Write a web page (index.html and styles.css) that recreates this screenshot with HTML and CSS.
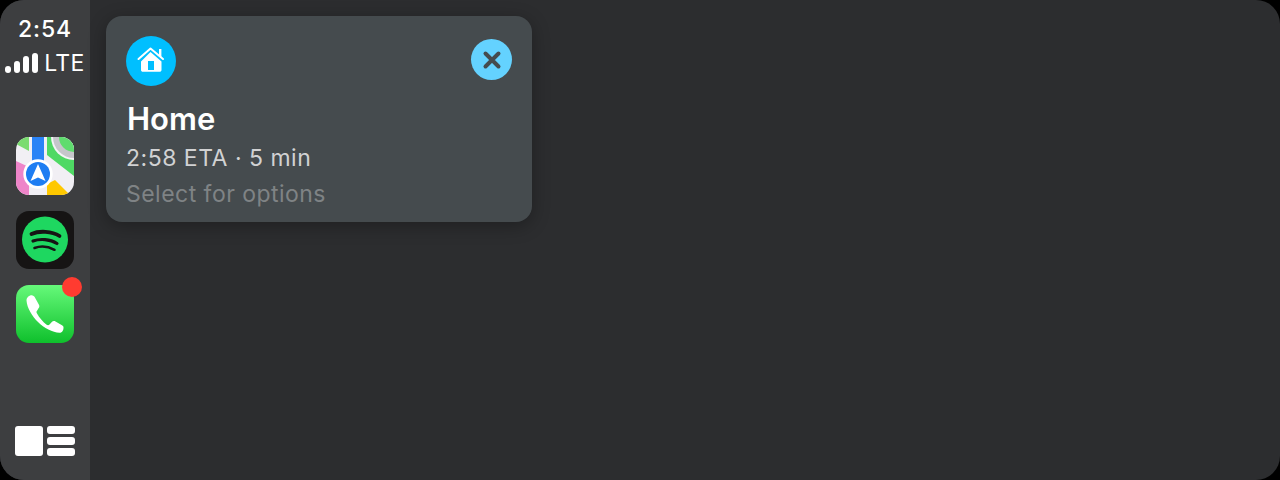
FILE: index.html
```html
<!DOCTYPE html>
<html lang="en">
<head>
<meta charset="utf-8">
<title>CarPlay</title>
<link rel="stylesheet" href="styles.css">
</head>
<body>
<div class="screen">
  <aside class="sidebar">
    <div class="status">
      <div class="time">2:54</div>
      <div class="signal">
        <span class="bars">
          <span class="bar bar1"></span><span class="bar bar2"></span><span class="bar bar3"></span><span class="bar bar4"></span>
        </span>
        <span class="lte">LTE</span>
      </div>
    </div>
    <nav class="apps">
      <svg class="app" viewBox="0 0 58 58" aria-label="Maps">
        <defs>
          <clipPath id="mapclip"><rect width="58" height="58" rx="13"/></clipPath>
        </defs>
        <g clip-path="url(#mapclip)">
          <rect width="58" height="58" fill="#f1eff4"/>
          <path d="M0 0H13V14L0 7Z" fill="#7bdc70"/>
          <path d="M31 0H58V39L31 18Z" fill="#4fd964"/>
          <path d="M0 24L13 30V58H0Z" fill="#ee85c9"/>
          <path d="M31 58V47L39 43L54 58Z" fill="#ffc800"/>
          <circle cx="58" cy="0" r="23" fill="#f4f3f6"/>
          <circle cx="58" cy="0" r="21" fill="#c6c6cb"/>
          <circle cx="58" cy="0" r="15" fill="#5fdc6e"/>
          <rect x="16" y="0" width="12" height="30" fill="#2a83f6"/>
          <circle cx="22" cy="37" r="14.700" fill="#fff"/>
          <circle cx="22" cy="37" r="12" fill="#1e7df2"/>
          <path d="M22 27L29.500 44L22 40.500L14.500 44Z" fill="#fff"/>
        </g>
      </svg>
      <svg class="app" viewBox="0 0 58 58" aria-label="Spotify">
        <rect width="58" height="58" rx="13" fill="#161414"/>
        <circle cx="29" cy="28.500" r="23" fill="#1ed760"/>
        <g fill="none" stroke="#161414" stroke-linecap="round">
          <path d="M15.500 23C23 19.500 36 20 43.500 25" stroke-width="3.800"/>
          <path d="M17 30C24 27.500 34 28 41 32.500" stroke-width="3.200"/>
          <path d="M18.500 37C24 35 32 35.300 38.500 38.800" stroke-width="2.500"/>
        </g>
      </svg>
      <div class="phone-wrap">
        <svg class="app" viewBox="0 0 58 58" aria-label="Phone">
          <defs>
            <linearGradient id="phonegrad" x1="0" y1="0" x2="0" y2="1">
              <stop offset="0" stop-color="#66f97a"/>
              <stop offset="1" stop-color="#0fc02c"/>
            </linearGradient>
          </defs>
          <rect width="58" height="58" rx="13" fill="url(#phonegrad)"/>
          <path d="M16.500 10.500C14.500 9.500 10.500 11.800 10.500 15.500C11 23 16 31 22 37C28 43 36.500 47.500 43.500 47.800C46.500 47.800 47.500 45 47.500 42.500C47.500 41.500 47 41 46 40.300L39.500 36.500C38 35.700 36.800 36 35.800 37L33.500 39.500C32.500 40.500 31.500 40.300 30.300 39.500C26.800 36.500 23.500 33 21 28.500C20.300 27.300 20.300 26.300 21.200 25.500L22.500 23.300C23.500 22.300 23.700 21 22.800 19.500L18.500 11.700C18 11 17.300 10.800 16.500 10.500Z" fill="#fff"/>
        </svg>
        <span class="badge"></span>
      </div>
    </nav>
    <div class="dash">
      <span class="dash-main"></span>
      <span class="dash-list"><span class="dash-row"></span><span class="dash-row"></span><span class="dash-row"></span></span>
    </div>
  </aside>
  <main class="main">
    <section class="card">
      <div class="card-head">
        <span class="home-icon">
          <svg viewBox="0 0 30 30" width="30" height="30" aria-hidden="true">
            <path d="M2.500 13L14.500 2.500L27 13" fill="none" stroke="#fff" stroke-width="2" stroke-linecap="round" stroke-linejoin="round"/>
            <rect x="23" y="3" width="2.400" height="8" fill="#fff"/>
            <path fill-rule="evenodd" d="M14.500 6L25.500 15.500V24C25.500 25 24.700 25.800 23.500 25.800H7C5.800 25.800 5 25 5 24V15.500ZM12 15V24H18V15Z" fill="#fff"/>
          </svg>
        </span>
        <span class="close-btn">
          <svg viewBox="0 0 20 20" width="20" height="20" aria-hidden="true">
            <path d="M3.500 3.500L16.500 16.500M16.500 3.500L3.500 16.500" stroke="#454b4e" stroke-width="4" stroke-linecap="round"/>
          </svg>
        </span>
      </div>
      <h1 class="title">Home</h1>
      <p class="eta">2:58 ETA · 5 min</p>
      <p class="hint">Select for options</p>
    </section>
  </main>
</div>
</body>
</html>
```
FILE: styles.css
```css
* {
  box-sizing: border-box;
}

html,
body {
  margin: 0;
  height: 100%;
  background: #000;
}

body {
  font-family: Inter, "Liberation Sans", sans-serif;
  overflow: hidden;
}

.screen {
  display: flex;
  width: 1280px;
  height: 480px;
  border-radius: 24px;
  overflow: hidden;
  background: #2c2d2f;
}

.sidebar {
  display: flex;
  flex-direction: column;
  align-items: center;
  width: 90px;
  flex: none;
  background: #3d3e40;
  padding-top: 14px;
  padding-bottom: 24px;
}

.status {
  display: flex;
  flex-direction: column;
  align-items: center;
  height: 123px;
}

.time {
  color: #fff;
  font-size: 23px;
  line-height: 30px;
  font-weight: 500;
  letter-spacing: 0.9px;
}

.signal {
  display: flex;
  align-items: flex-end;
  gap: 6px;
  margin-top: 4px;
  height: 30px;
  padding-bottom: 5px;
}

.bars {
  display: flex;
  align-items: flex-end;
  gap: 3px;
}

.bar {
  display: block;
  width: 6px;
  background: #fff;
  border-radius: 3px;
}

.bar1 { height: 7px; }
.bar2 { height: 12px; }
.bar3 { height: 17px; }
.bar4 { height: 20px; }

.lte {
  color: #fff;
  font-size: 23px;
  line-height: 20px;
  font-weight: 400;
  letter-spacing: 0.4px;
}

.apps {
  display: flex;
  flex-direction: column;
  gap: 16px;
}

.app {
  display: block;
  width: 58px;
  height: 58px;
}

.phone-wrap {
  position: relative;
}

.badge {
  position: absolute;
  top: -8px;
  right: -8px;
  width: 20px;
  height: 20px;
  border-radius: 50%;
  background: #ff3b30;
}

.dash {
  display: flex;
  gap: 4px;
  margin-top: auto;
}

.dash-main {
  width: 28px;
  height: 30px;
  border-radius: 3px;
  background: #fff;
}

.dash-list {
  display: flex;
  flex-direction: column;
  justify-content: space-between;
}

.dash-row {
  width: 28px;
  height: 8px;
  border-radius: 3px;
  background: #fff;
}

.main {
  flex: 1;
  padding: 16px;
}

.card {
  width: 426px;
  height: 206px;
  padding: 20px 20px 0 20px;
  border-radius: 16px;
  background: #454b4e;
  box-shadow: 0 4px 18px rgba(0, 0, 0, 0.3);
}

.card-head {
  display: flex;
  justify-content: space-between;
  align-items: flex-start;
  height: 50px;
}

.home-icon {
  display: flex;
  align-items: center;
  justify-content: center;
  width: 50px;
  height: 50px;
  border-radius: 50%;
  background: #00bfff;
}

.close-btn {
  display: flex;
  align-items: center;
  justify-content: center;
  width: 41px;
  height: 41px;
  margin-top: 3px;
  border-radius: 50%;
  background: #64d2ff;
}

.title {
  margin: 14px 0 0 1px;
  color: #fff;
  font-size: 31px;
  line-height: 38px;
  font-weight: 600;
}

.eta {
  margin: 5px 0 0;
  color: #d1d2d3;
  font-size: 23px;
  line-height: 30px;
  letter-spacing: 0.5px;
}

.hint {
  margin: 6px 0 0;
  color: #7f8385;
  font-size: 23px;
  line-height: 30px;
  letter-spacing: 0.47px;
}
```
